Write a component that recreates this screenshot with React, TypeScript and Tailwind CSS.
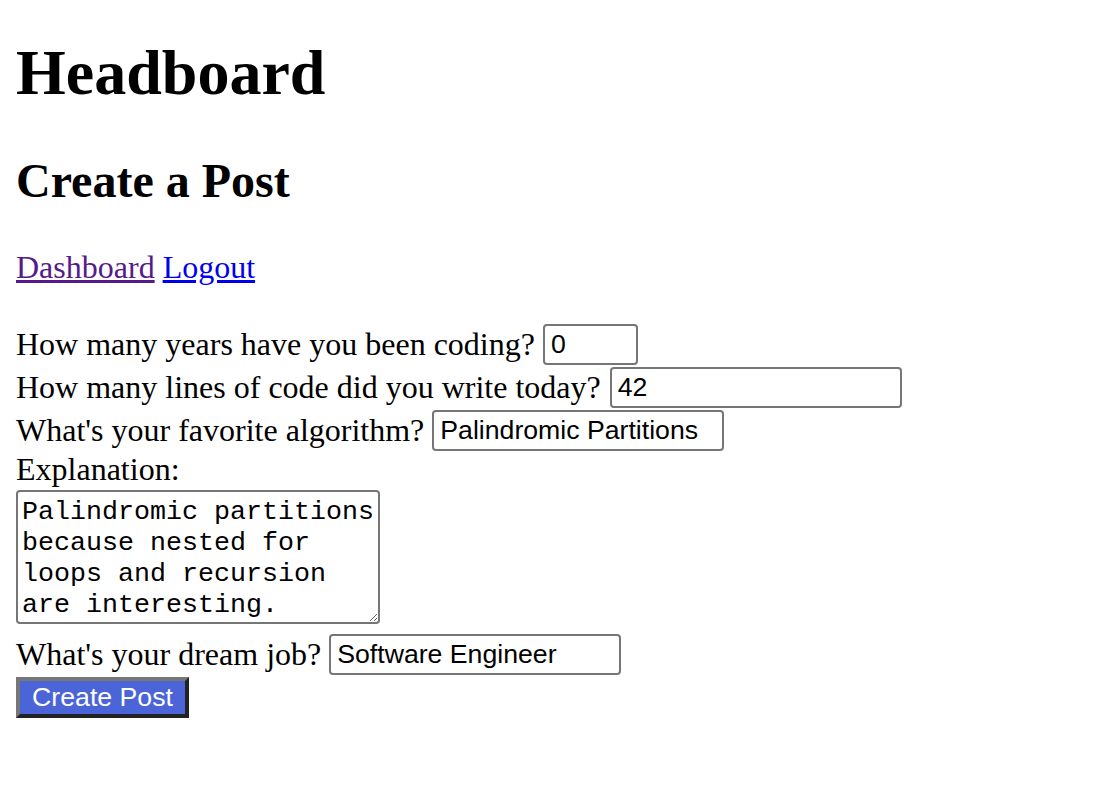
import React from "react";

export default function App() {
  const inputCls =
    "h-[41px] border-2 border-[#767676] rounded-[4px] bg-white pl-[6px] pr-[4px] text-[26.67px] font-['Liberation_Sans',Arial,sans-serif] text-black outline-none";
  return (
    <div className="min-h-[808px] bg-white px-4 font-['Liberation_Serif','Times_New_Roman',serif] text-[32px] text-black">
      <h1 className="pt-[36px] text-[64px] font-bold leading-[74px]">Headboard</h1>
      <h2 className="mt-[43px] text-[48px] font-bold leading-[55px]">Create a Post</h2>
      <div className="mt-[41px] flex gap-[8px] leading-[37px]">
        <a href="#" className="text-[#551a8b] underline">Dashboard</a>
        <a href="#" className="text-[#0000ee] underline">Logout</a>
      </div>
      <form className="mt-[37px] flex flex-col items-start" onSubmit={(e) => e.preventDefault()}>
        <div className="flex h-[43px] items-center gap-[8px] leading-[33px]">
          <span>How many years have you been coding?</span>
          <input className={inputCls + " w-[95px]"} defaultValue="0" />
        </div>
        <div className="flex h-[43px] items-center gap-[9px] leading-[33px]">
          <span>How many lines of code did you write today?</span>
          <input className={inputCls + " w-[292px]"} defaultValue="42" />
        </div>
        <div className="flex h-[43px] items-center gap-[8px] leading-[33px]">
          <span>What's your favorite algorithm?</span>
          <input className={inputCls + " w-[292px]"} defaultValue="Palindromic Partitions" />
        </div>
        <div className="leading-[35px]">Explanation:</div>
        <textarea
          className="mt-[3px] h-[134px] w-[364px] resize-y overflow-hidden border-2 border-[#767676] rounded-[4px] bg-white pt-[5px] pb-[2px] pl-[4px] pr-[2px] font-['Liberation_Mono','Courier_New',monospace] text-[26.67px] leading-[31px] text-black outline-none"
          defaultValue="Palindromic partitions because nested for loops and recursion are interesting."
        />
        <div className="mt-[9px] flex h-[43px] items-center gap-[8px] leading-[35px]">
          <span>What's your dream job?</span>
          <input className={inputCls + " w-[292px]"} defaultValue="Software Engineer" />
        </div>
        <button
          type="submit"
          className="mt-[1px] h-[41px] w-[173px] border-4 border-t-[#767676] border-l-[#767676] border-b-[#222222] border-r-[#222222] bg-[#4b65d8] font-['Liberation_Sans',Arial,sans-serif] text-[26.67px] leading-none text-white"
        >
          Create Post
        </button>
      </form>
    </div>
  );
}
